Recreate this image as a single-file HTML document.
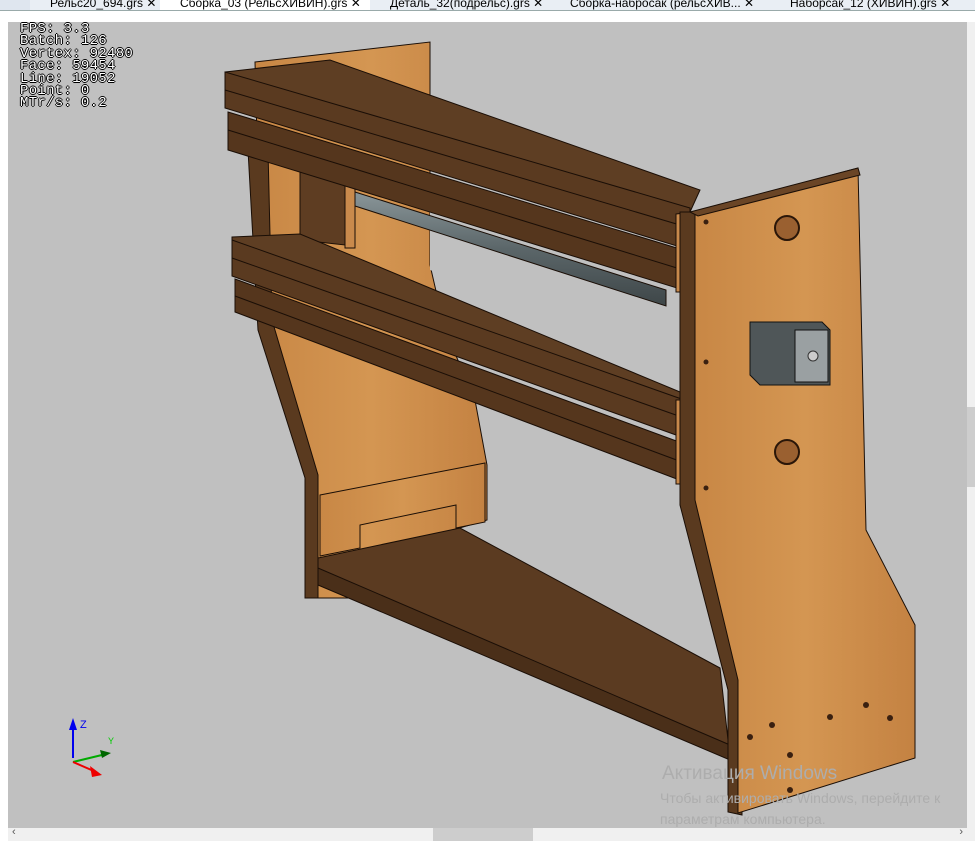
<!DOCTYPE html>
<html><head><meta charset="utf-8"><style>
body{margin:0;width:975px;height:841px;overflow:hidden;background:#fff;font-family:"Liberation Sans",sans-serif;position:relative}
.tabs{position:absolute;left:0;top:0;width:975px;height:10px;background:#dfe6ef;border-bottom:1px solid #9aa}
.tab{position:absolute;top:-4px;height:14px;font-size:12px;color:#000;background:#e9eef4;border-right:1px solid #889;padding-left:20px;white-space:nowrap;overflow:hidden}
.tab.act{background:#fff}
.vp{position:absolute;left:8px;top:22px;width:959px;height:806px;background:#c0c0c0}
.stats{position:absolute;left:20px;top:23px;font-family:"Liberation Mono",monospace;font-size:14px;line-height:12.4px;color:#fff;text-shadow:1px 0 #000,-1px 0 #000,0 1px #000,0 -1px #000;letter-spacing:0.3px}
.hs{position:absolute;left:8px;top:828px;width:959px;height:13px;background:#f0f0f0}
.vs{position:absolute;left:967px;top:22px;width:8px;height:819px;background:#f0f0f0}
.wm1{position:absolute;left:662px;top:763px;font-size:19px;color:#adadad}
.wm2{position:absolute;left:660px;top:788px;font-size:14px;color:#adadad;line-height:21px}
</style></head><body>
<div class="tabs">
<div class="tab" style="left:30px;width:125px">Рельс20_694.grs ✕</div>
<div class="tab act" style="left:160px;width:205px">Сборка_03 (РельсХИВИН).grs ✕</div>
<div class="tab" style="left:370px;width:175px">Деталь_32(подрельс).grs ✕</div>
<div class="tab" style="left:550px;width:210px">Сборка-набросак (рельсХИВ... ✕</div>
<div class="tab" style="left:770px;width:200px">Наборсак_12 (ХИВИН).grs ✕</div>
</div>
<div class="vp"></div>
<svg style="position:absolute;left:0;top:0" width="975" height="841">
<defs>
<linearGradient id="lw" x1="0" x2="1"><stop offset="0" stop-color="#c88745"/><stop offset=".5" stop-color="#d49652"/><stop offset="1" stop-color="#c48242"/></linearGradient>
<linearGradient id="rod" x1="0" y1="0" x2="0" y2="1"><stop offset="0" stop-color="#8a9699"/><stop offset=".5" stop-color="#5b6669"/><stop offset="1" stop-color="#3e4648"/></linearGradient>
</defs>
<g stroke="#1a0e06" stroke-width="1">
<polygon points="255,62 430,42 430,265 445,330 475,400 487,465 487,520 350,560 350,598 308,598 308,475 262,330" fill="url(#lw)"/>
<polygon points="248,150 268,150 272,320 318,475 318,598 305,598 305,478 258,330" fill="#5a3a1f"/>
<polygon points="430,190 670,260 670,350 430,270" fill="#c0c0c0" stroke="none"/>
<polygon points="300,168 345,178 345,245 300,240" fill="#5e3d22"/>
<polygon points="345,180 355,180 355,248 345,248" fill="#c98a4c"/>
<polygon points="355,192 666,290 666,306 355,206" fill="url(#rod)"/>
<!-- top boards -->
<polygon points="225,72 330,60 700,190 690,212 225,80" fill="#5e3e23"/>
<polygon points="225,72 690,208 690,250 225,108" fill="#5a3a20"/>
<polygon points="228,112 690,252 690,292 228,150" fill="#55361d"/>
<line x1="225" y1="90" x2="690" y2="228"/><line x1="228" y1="130" x2="690" y2="272"/>
<polygon points="676,214 695,212 695,292 676,292" fill="#c98a4c"/>
<!-- middle boards -->
<polygon points="232,237 300,234 680,392 680,402 232,245" fill="#5e3e23"/>
<polygon points="232,240 690,402 690,440 232,276" fill="#5a3a20"/>
<polygon points="235,279 690,446 690,484 235,312" fill="#55361d"/>
<line x1="232" y1="258" x2="690" y2="420"/><line x1="235" y1="296" x2="690" y2="465"/>
<polygon points="676,400 695,400 695,484 676,484" fill="#c98a4c"/>
<polygon points="320,495 485,463 485,522 456,528 456,505 360,525 360,548 320,556" fill="url(#lw)"/>
<polygon points="318,558 460,528 720,668 730,758 318,580" fill="#5b3b21"/>
<polygon points="318,568 730,745 730,760 318,585" fill="#4a2f19"/>
<polygon points="680,212 698,212 698,500 742,680 742,815 728,812 728,690 680,505" fill="#5a3a1f"/>
<polygon points="695,212 858,168 866,530 915,625 915,758 738,813 738,680 695,500" fill="url(#lw)"/>
<polygon points="690,212 858,168 860,175 698,216" fill="#6a4526"/>
</g>
<g fill="#9a6030" stroke="#2a1608" stroke-width="2">
<circle cx="787" cy="228" r="12"/><circle cx="787" cy="452" r="12"/>
</g>
<g fill="#3a2010">
<circle cx="706" cy="222" r="2.5"/><circle cx="706" cy="362" r="2.5"/><circle cx="706" cy="488" r="2.5"/>
<circle cx="772" cy="725" r="3"/><circle cx="790" cy="755" r="3"/><circle cx="830" cy="717" r="3"/><circle cx="866" cy="705" r="3"/><circle cx="890" cy="718" r="3"/><circle cx="750" cy="737" r="3"/><circle cx="790" cy="790" r="3"/>
</g>
<polygon points="750,322 822,322 830,330 830,385 760,385 750,375" fill="#4f5658" stroke="#111"/>
<polygon points="795,330 828,330 828,382 795,382" fill="#9aa0a2" stroke="#111"/>
<circle cx="813" cy="356" r="5" fill="#ccc" stroke="#333"/>
<line x1="73" y1="758" x2="73" y2="722" stroke="#0000ee" stroke-width="2"/>
<polygon points="69,730 73,718 77,730" fill="#0000ee"/>
<text x="80" y="728" font-size="11" fill="#0000ee" font-family="Liberation Sans">Z</text>
<line x1="73" y1="762" x2="106" y2="754" stroke="#00aa00" stroke-width="2"/>
<polygon points="100,750 111,753 102,758" fill="#006600"/>
<text x="108" y="744" font-size="9" fill="#00cc00">Y</text>
<line x1="73" y1="762" x2="96" y2="772" stroke="#ee0000" stroke-width="2"/>
<polygon points="90,766 102,775 92,777" fill="#ee0000"/>
</svg>
<div class="stats">FPS: 3.3<br>Batch: 126<br>Vertex: 92480<br>Face: 59454<br>Line: 19052<br>Point: 0<br>MTr/s: 0.2</div>
<div class="wm1">Активация Windows</div>
<div class="wm2">Чтобы активировать Windows, перейдите к<br>параметрам компьютера.</div>
<div class="vs"><div style="position:absolute;top:385px;width:8px;height:80px;background:#cdcdcd"></div></div>
<div class="hs"><div style="position:absolute;left:425px;width:100px;height:13px;background:#cdcdcd"></div><span style="position:absolute;left:4px;top:-2px;font-size:11px;color:#555">‹</span><span style="position:absolute;right:4px;top:-2px;font-size:11px;color:#555">›</span></div>
</body></html>
